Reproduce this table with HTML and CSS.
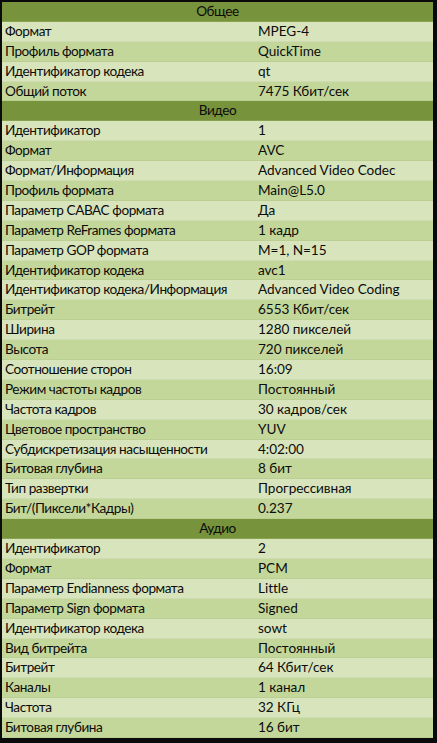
FILE: index.html
```html
<!DOCTYPE html>
<html>
<head>
<meta charset="utf-8">
<link rel="stylesheet" href="styles.css">
</head>
<body>
<div class="sheet">
  <div class="sec">
    <div class="head">Общее</div>
    <div class="row"><span class="k">Формат</span><span class="v">MPEG-4</span></div>
    <div class="row"><span class="k">Профиль формата</span><span class="v">QuickTime</span></div>
    <div class="row"><span class="k">Идентификатор кодека</span><span class="v">qt</span></div>
    <div class="row"><span class="k">Общий поток</span><span class="v">7475 Кбит/сек</span></div>
  </div>
  <div class="sec">
    <div class="head">Видео</div>
    <div class="row"><span class="k">Идентификатор</span><span class="v">1</span></div>
    <div class="row"><span class="k">Формат</span><span class="v">AVC</span></div>
    <div class="row"><span class="k">Формат/Информация</span><span class="v">Advanced Video Codec</span></div>
    <div class="row"><span class="k">Профиль формата</span><span class="v">Main@L5.0</span></div>
    <div class="row"><span class="k">Параметр CABAC формата</span><span class="v">Да</span></div>
    <div class="row"><span class="k">Параметр ReFrames формата</span><span class="v">1 кадр</span></div>
    <div class="row"><span class="k">Параметр GOP формата</span><span class="v">M=1, N=15</span></div>
    <div class="row"><span class="k">Идентификатор кодека</span><span class="v">avc1</span></div>
    <div class="row"><span class="k">Идентификатор кодека/Информация</span><span class="v">Advanced Video Coding</span></div>
    <div class="row"><span class="k">Битрейт</span><span class="v">6553 Кбит/сек</span></div>
    <div class="row"><span class="k">Ширина</span><span class="v">1280 пикселей</span></div>
    <div class="row"><span class="k">Высота</span><span class="v">720 пикселей</span></div>
    <div class="row"><span class="k">Соотношение сторон</span><span class="v">16:09</span></div>
    <div class="row"><span class="k">Режим частоты кадров</span><span class="v">Постоянный</span></div>
    <div class="row"><span class="k">Частота кадров</span><span class="v">30 кадров/сек</span></div>
    <div class="row"><span class="k">Цветовое пространство</span><span class="v">YUV</span></div>
    <div class="row"><span class="k">Субдискретизация насыщенности</span><span class="v">4:02:00</span></div>
    <div class="row"><span class="k">Битовая глубина</span><span class="v">8 бит</span></div>
    <div class="row"><span class="k">Тип развертки</span><span class="v">Прогрессивная</span></div>
    <div class="row"><span class="k">Бит/(Пиксели*Кадры)</span><span class="v">0.237</span></div>
  </div>
  <div class="sec">
    <div class="head">Аудио</div>
    <div class="row"><span class="k">Идентификатор</span><span class="v">2</span></div>
    <div class="row"><span class="k">Формат</span><span class="v">PCM</span></div>
    <div class="row"><span class="k">Параметр Endianness формата</span><span class="v">Little</span></div>
    <div class="row"><span class="k">Параметр Sign формата</span><span class="v">Signed</span></div>
    <div class="row"><span class="k">Идентификатор кодека</span><span class="v">sowt</span></div>
    <div class="row"><span class="k">Вид битрейта</span><span class="v">Постоянный</span></div>
    <div class="row"><span class="k">Битрейт</span><span class="v">64 Кбит/сек</span></div>
    <div class="row"><span class="k">Каналы</span><span class="v">1 канал</span></div>
    <div class="row"><span class="k">Частота</span><span class="v">32 КГц</span></div>
    <div class="row"><span class="k">Битовая глубина</span><span class="v">16 бит</span></div>
  </div>
</div>
</body>
</html>
```
FILE: styles.css
```css
html, body {
  margin: 0;
  padding: 0;
  background: #0a0a0a;
}
body {
  width: 437px;
  height: 743px;
  overflow: hidden;
}
.sheet {
  margin: 2px 0 0 2px;
  width: 431px;
  display: flex;
  flex-direction: column;
  font-family: "Lato", "Open Sans", sans-serif;
  font-size: 13.6px;
  letter-spacing: -0.45px;
  color: #0c0c0c;
}
.sec {
  display: flex;
  flex-direction: column;
}
.head {
  height: 19.9px;
  line-height: 19.9px;
  background: #77933c;
  text-align: center;
  border-bottom: 1px solid #8aa350;
  box-sizing: border-box;
}
.row {
  height: 19.9px;
  line-height: 19.9px;
  display: grid;
  grid-template-columns: 256px 1fr;
  background: #d8e4bc;
  border-bottom: 1px solid #cfdcb2;
  box-sizing: border-box;
}
.row:nth-child(odd) {
  background: #c4d79b;
  border-bottom-color: #bccf93;
}
.k {
  padding-left: 3px;
  white-space: nowrap;
}
.v {
  white-space: nowrap;
  letter-spacing: -0.05px;
}
```
